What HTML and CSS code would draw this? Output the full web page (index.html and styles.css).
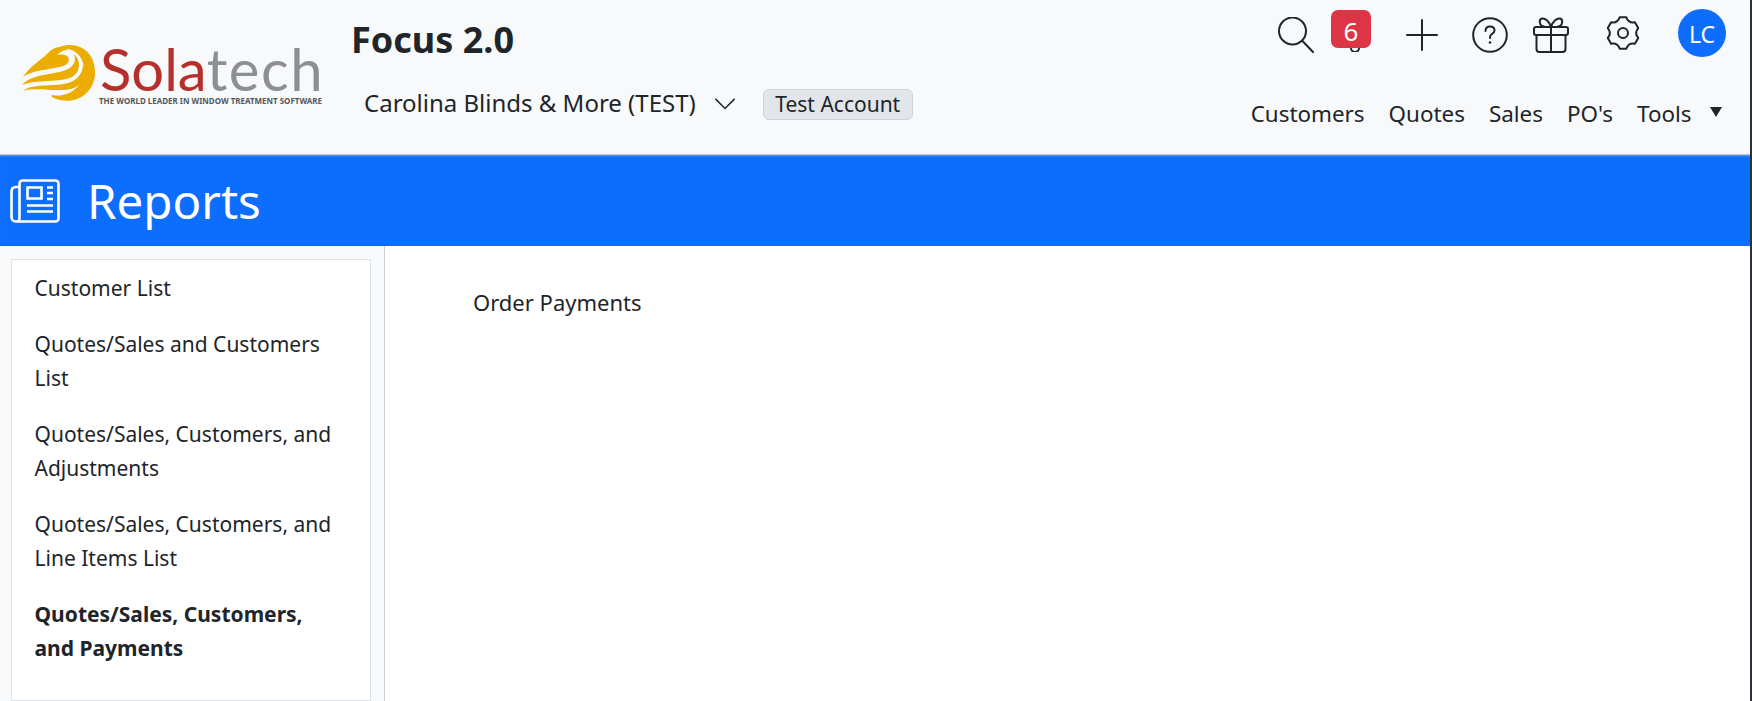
FILE: index.html
```html
<!DOCTYPE html>
<html lang="en">
<head>
<meta charset="utf-8">
<title>Reports</title>
<link rel="stylesheet" href="styles.css">
</head>
<body>
<div class="page">
  <header class="topbar">
    <svg class="logo" viewBox="0 -10 304 72" aria-label="Solatech">
      <path class="swoosh" d="M40 3C58-4 76 8 75 30C74 48 58 60 40 56C32 54 30 52 32 51C48 54 62 44 64 28C65 16 58 7 48 5C45 4 42 4 40 3Z"/>
      <path class="swoosh" d="M3 33C10 22 20 17 28 9C33 4 38 2 44 3L48 6C43 6 40 8 37 11C47 9 52 14 47 20C38 26 16 24 3 33Z"/>
      <path class="swoosh" d="M2 41C14 28 36 32 50 24C55 20 56 15 54 10C61 16 61 28 52 33C40 39 16 35 2 41Z"/>
      <path class="swoosh" d="M3 47C14 38 36 44 51 38C59 34 63 28 63 20C66 28 65 38 56 43C44 50 16 42 3 47Z"/>
      <text class="logo-word" x="80" y="47"><tspan class="logo-sola">Sola</tspan><tspan class="logo-tech">tech</tspan></text>
      <text class="logo-tag" x="79" y="60" textLength="223" lengthAdjust="spacingAndGlyphs">THE WORLD LEADER IN WINDOW TREATMENT SOFTWARE</text>
    </svg>
    <div class="brand">
      <h1 class="title">Focus 2.0</h1>
      <div class="account">
        <span class="account-name">Carolina Blinds &amp; More (TEST)</span>
        <svg class="chevron" viewBox="0 0 16 16"><path d="M1.6 4.6 8 11l6.4-6.4"/></svg>
        <span class="tag">Test Account</span>
      </div>
    </div>
    <div class="right">
      <div class="icons">
        <svg class="icon icon-search" viewBox="0 0 36 36"><circle cx="14.500" cy="14" r="13.500"/><path d="M24.500 24 35 35"/></svg>
        <span class="bell">
          <svg class="bell-icon" viewBox="0 0 24 24"><path d="M8 20a4 4 0 0 0 8 0"/></svg>
          <span class="badge">6</span>
        </span>
        <svg class="icon icon-plus" viewBox="0 0 36 36"><path d="M18 3v30M3 18h30"/></svg>
        <svg class="icon icon-help" viewBox="0 0 36 36"><circle cx="18" cy="18" r="16.800"/><path d="M13.500 14C13.500 11 15.500 9.500 18 9.500C20.500 9.500 22.500 11 22.500 13.500C22.500 16 20 16.500 18.500 18.500C18 19.300 18 20 18 21"/><circle class="dot" cx="18" cy="25.500" r="1.300"/></svg>
        <svg class="icon icon-gift" viewBox="0 0 36 36"><rect x="1" y="10" width="34" height="8" rx="2"/><path d="M3.500 18V32a3 3 0 0 0 3 3H29.500a3 3 0 0 0 3-3V18M18 10V35M18 10C16 4 12 1 9 1.500C6 2 6 7 9 9L12 10M18 10C20 4 24 1 27 1.500C30 2 30 7 27 9L24 10"/></svg>
        <svg class="icon icon-gear" viewBox="0 0 36 36"><path d="M14.670 2.350L21.330 2.350Q23.500 8.470 29.890 7.300L33.220 13.060Q29 18 33.220 22.940L29.890 28.700Q23.500 27.530 21.330 33.650L14.670 33.650Q12.500 27.530 6.110 28.700L2.780 22.940Q7 18 2.780 13.060L6.110 7.300Q12.500 8.470 14.670 2.350Z"/><circle cx="18" cy="18" r="5"/></svg>
        <span class="avatar">LC</span>
      </div>
      <nav class="nav">
        <a>Customers</a>
        <a>Quotes</a>
        <a>Sales</a>
        <a>PO's</a>
        <a>Tools</a>
        <span class="caret"></span>
      </nav>
    </div>
  </header>
  <section class="banner">
    <svg class="banner-icon" viewBox="0 0 50 44">
      <path d="M7 42.500C9 42.500 9.500 40.500 9.500 38V4.500a3 3 0 0 1 3-3H45.500a3 3 0 0 1 3 3V39.500a3 3 0 0 1-3 3H6C3.500 42.500 1.500 41 1.500 38V13C1.500 10 3 8 6 8H9.500"/>
      <path d="M17.500 8.500H31.500V19.500H17.500zM37 8.500H43M37 14H43M37 20H43M17 26.500H43M17 32.500H43"/>
    </svg>
    <h2 class="banner-title">Reports</h2>
  </section>
  <main class="layout">
    <aside class="sidebar">
      <ul class="menu">
        <li>Customer List</li>
        <li>Quotes/Sales and Customers List</li>
        <li>Quotes/Sales, Customers, and Adjustments</li>
        <li>Quotes/Sales, Customers, and Line Items List</li>
        <li class="active">Quotes/Sales, Customers, and Payments</li>
      </ul>
    </aside>
    <section class="content">
      <p class="content-title">Order Payments</p>
    </section>
  </main>
</div>
</body>
</html>
```
FILE: styles.css
```css
* { box-sizing: border-box; }
html, body { margin: 0; height: 100%; }
body {
  font-family: "Noto Sans", "Open Sans", sans-serif;
  color: #212529;
  background: #f8f9fa;
  overflow: hidden;
}
.page { height: 701px; display: flex; flex-direction: column; border-right: 2px solid #2e3033; }
.topbar {
  height: 155px;
  flex: none;
  display: flex;
  background: #f8f9fa;
  border-bottom: 1px solid #c4c8cc;
  padding: 0 24px 0 20px;
}
.logo { width: 304px; height: 72px; margin-top: 34px; flex: none; }
.swoosh { fill: #ecac00; }
.logo-word { font-family: Lato, "Liberation Sans", sans-serif; font-size: 58px; }
.logo-sola { fill: #b5302b; }
.logo-tech { fill: #8d8f92; letter-spacing: 1.500px; }
.logo-tag { font-family: "Noto Sans", sans-serif; font-weight: 700; font-size: 8px; fill: #55565a; }
.brand { margin-left: 27px; padding-top: 18px; }
.title { margin: 0; font-size: 36px; line-height: 44px; font-weight: 700; }
.account { display: flex; align-items: center; margin-top: 24px; padding-left: 13px; }
.account-name { font-size: 24px; line-height: 30px; }
.chevron { width: 24px; height: 24px; margin: 2px 0 0 17px; fill: none; stroke: #212529; stroke-width: 1; flex: none; }
.tag {
  margin: 3px 0 0 26px;
  font-size: 21px;
  line-height: 29px;
  padding: 0 11.500px;
  height: 31px;
  background: #e2e5ea;
  border: 1px solid #ced4da;
  border-radius: 6px;
}
.right { margin-left: auto; display: flex; flex-direction: column; align-items: flex-end; }
.icons { display: flex; align-items: flex-start; height: 66px; }
.icon { width: 36px; height: 36px; margin-top: 17px; fill: none; stroke: #212529; stroke-width: 2; stroke-linecap: round; stroke-linejoin: round; display: block; flex: none; }
.dot { fill: #212529; stroke: none; }
.icon-search { margin-right: 17px; }
.bell { position: relative; width: 40px; height: 42px; margin: 10px 33px 0 0; flex: none; }
.bell-icon { position: absolute; left: 12px; top: 18px; width: 24px; height: 24px; fill: none; stroke: #212529; stroke-width: 2; }
.badge {
  position: absolute;
  left: 0;
  top: 0;
  width: 40px;
  height: 38px;
  background: #dc3545;
  color: #fff;
  border-radius: 7px;
  font-size: 26px;
  line-height: 42px;
  text-align: center;
}
.icon-plus { margin-right: 32px; }
.icon-help { margin-right: 25px; }
.icon-gift { margin-right: 36px; }
.icon-gear { margin: 15px 37px 0 0; }
.avatar {
  width: 48px;
  height: 48px;
  margin-top: 9px;
  border-radius: 50%;
  background: #0d6efd;
  color: #fff;
  font-size: 23px;
  line-height: 50px;
  text-align: center;
  flex: none;
}
.nav { display: flex; align-items: center; margin-top: 33px; font-size: 22.400px; line-height: 30px; }
.nav a { margin-right: 24px; }
.nav a:nth-child(5) { margin-right: 18.500px; }
.caret { width: 0; height: 0; border-left: 6px solid transparent; border-right: 6px solid transparent; border-top: 10px solid #212529; margin: -4px 4px 0 0; }
.banner {
  height: 91px;
  flex: none;
  background: #0d6efd;
  box-shadow: inset 0 2px 2px -1px rgba(255, 255, 255, .35);
  color: #fff;
  display: flex;
  align-items: center;
  padding-left: 10px;
}
.banner-icon { width: 50px; height: 44px; fill: none; stroke: #fff; stroke-width: 2.600; flex: none; }
.banner-title { margin: 0 0 0 27px; font-size: 47.500px; font-weight: 400; line-height: 60px; }
.layout { flex: 1; display: flex; min-height: 0; }
.sidebar { width: 385px; flex: none; padding: 13px 13px 0 11px; border-right: 1px solid #ced0d3; }
.menu {
  list-style: none;
  margin: 0;
  padding: 0 29px 0 22.500px;
  height: 100%;
  background: #fff;
  border: 1px solid #dee2e6;
  font-size: 21px;
  line-height: 34px;
}
.menu li { padding: 11px 0; }
.active { font-weight: 700; }
.content { flex: 1; background: #fff; padding: 39px 88px; }
.content-title { margin: 0; font-size: 22px; line-height: 34px; }
```
